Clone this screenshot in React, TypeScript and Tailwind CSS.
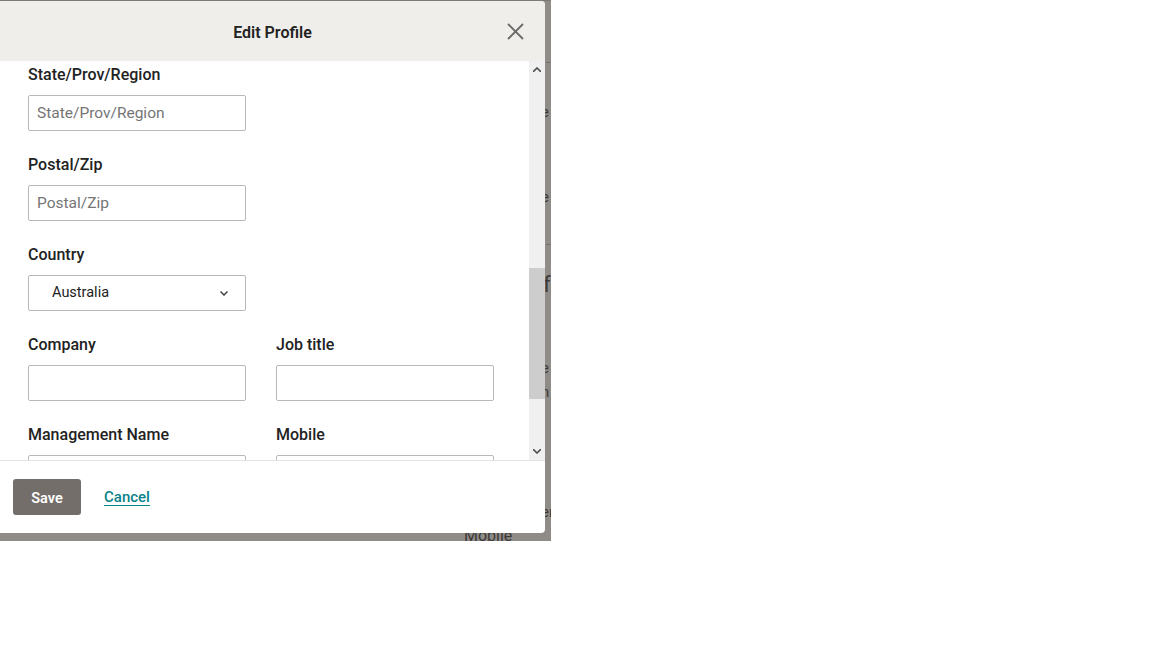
import React from 'react';

const font = { fontFamily: 'Roboto, "Liberation Sans", sans-serif' };

type FieldProps = { label: string; placeholder?: string };

const Field: React.FC<FieldProps> = ({ label, placeholder }) => (
  <div className="flex flex-col w-[218px]">
    <label className="h-5 text-[16px] leading-5 font-medium text-[#222]">{label}</label>
    <input
      className="mt-[10px] h-9 w-full rounded-[2px] border border-[#b8b8b8] px-2 text-[15.5px] text-[#333] placeholder:text-[#757575] outline-none"
      placeholder={placeholder}
      style={font}
    />
  </div>
);

const ScrollArrow: React.FC<{ up?: boolean }> = ({ up }) => (
  <div className="flex h-[17px] items-center justify-center">
    <svg width="8" height="5" viewBox="0 0 8 5">
      <path d={up ? 'M0 5 L4 1 L8 5' : 'M0 0 L4 4 L8 0'} fill="none" stroke="#505050" strokeWidth="1.6" />
    </svg>
  </div>
);

export default function App() {
  return (
    <div className="min-h-[648px] w-[1152px] bg-white" style={font}>
      <div className="relative h-[541px] w-[551px] overflow-hidden bg-[#8f8b87]">
        {/* page underneath the overlay */}
        <div className="absolute left-0 top-0 h-px w-full bg-[#7d7975]" />
        <div className="absolute left-[546px] top-[62px] h-px w-[6px] bg-[#77736f]" />
        <div className="absolute left-[546px] top-[244px] h-px w-[6px] bg-[#77736f]" />
        <span className="absolute left-[541px] top-[101px] text-[15px] text-[#3d3a37]">e</span>
        <span className="absolute left-[541px] top-[186px] text-[15px] text-[#3d3a37]">e</span>
        <span className="absolute left-[543px] top-[268px] text-[22px] text-[#3d3a37]">f</span>
        <span className="absolute left-[541px] top-[357px] text-[15px] text-[#3d3a37]">e</span>
        <span className="absolute left-[541px] top-[381px] text-[15px] text-[#3d3a37]">n</span>
        <span className="absolute left-[541px] top-[501px] text-[15px] text-[#3d3a37]">er</span>
        <span className="absolute left-[464px] top-[524px] text-[16px] text-[#3d3a37]">Mobile</span>

        {/* modal */}
        <div className="absolute left-0 top-px flex h-[532px] w-[545px] flex-col overflow-hidden rounded-r-[4px] bg-white">
          <div className="relative flex h-[60px] shrink-0 items-center justify-center bg-[#efeeeb] pt-[3px]">
            <h2 className="text-[16px] font-semibold text-[#222]">Edit Profile</h2>
            <button className="absolute right-[21px] top-[21px] flex h-[18px] w-[18px] items-center justify-center">
              <svg width="17" height="17" viewBox="0 0 17 17">
                <path d="M1 1 L16 16 M16 1 L1 16" stroke="#6a6a6a" strokeWidth="1.8" />
              </svg>
            </button>
          </div>

          <div className="flex min-h-0 flex-1 border-b border-[#e2e2e2]">
            <div className="flex-1 overflow-hidden pl-7 pt-[4px]">
              <div className="flex flex-col gap-[24px]">
                <Field label="State/Prov/Region" placeholder="State/Prov/Region" />
                <Field label="Postal/Zip" placeholder="Postal/Zip" />
                <div className="flex w-[218px] flex-col">
                  <label className="h-5 text-[16px] leading-5 font-medium text-[#222]">Country</label>
                  <div className="mt-[10px] flex h-9 items-center justify-between rounded-[2px] border border-[#b8b8b8] pl-[23px] pr-[17px]">
                    <span className="text-[14.5px] text-[#222]">Australia</span>
                    <svg width="8" height="5" viewBox="0 0 8 5">
                      <path d="M0.5 0.5 L4 4 L7.5 0.5" fill="none" stroke="#444" strokeWidth="1.5" />
                    </svg>
                  </div>
                </div>
                <div className="flex gap-[30px]">
                  <Field label="Company" />
                  <Field label="Job title" />
                </div>
                <div className="flex gap-[30px]">
                  <Field label="Management Name" />
                  <Field label="Mobile" />
                </div>
              </div>
            </div>
            <div className="flex w-4 shrink-0 flex-col bg-[#f0f0f0]">
              <ScrollArrow up />
              <div className="h-[190px]" />
              <div className="h-[131px] bg-[#cdcdcd]" />
              <div className="flex-1" />
              <ScrollArrow />
            </div>
          </div>

          <div className="flex h-[72px] shrink-0 items-start gap-[23px] pl-[13px] pt-[18px]">
            <button className="h-9 w-[68px] rounded-[3px] bg-[#736e69] pt-[3px] text-[14.5px] font-semibold text-white">
              Save
            </button>
            <a href="#" className="mt-[7px] text-[15px] font-medium text-[#0a8387] underline underline-offset-[3px]">
              Cancel
            </a>
          </div>
        </div>
      </div>
    </div>
  );
}
